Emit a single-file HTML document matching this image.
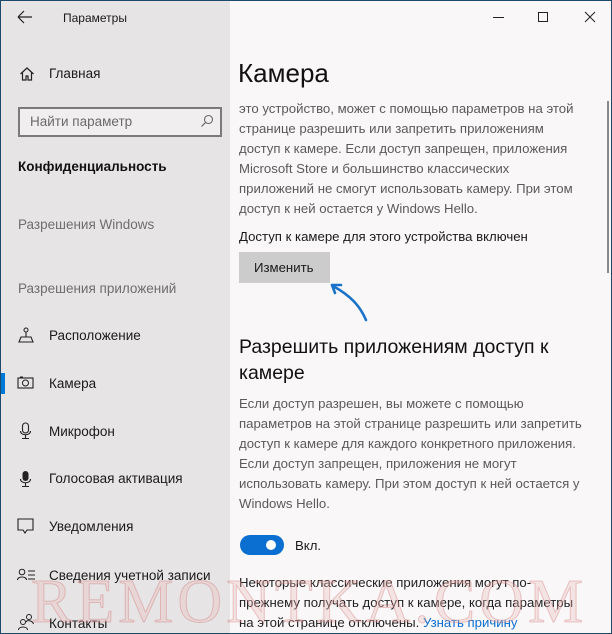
<!DOCTYPE html>
<html><head><meta charset="utf-8"><style>
*{margin:0;padding:0;box-sizing:border-box}
html,body{width:612px;height:634px;overflow:hidden;background:#1d4a6a}
body{font-family:"Liberation Sans","DejaVu Sans",sans-serif;position:relative}
#win{position:absolute;left:1px;top:1px;width:610px;height:632px;background:#f9f7f8;overflow:hidden}
#side{position:absolute;left:0;top:0;width:229px;height:632px;background:#e6e4e5}
.t{position:absolute;white-space:nowrap;font-size:13.5px;color:#1a1a1a}
.g{color:#6e6e6e}
.ic{position:absolute}
.body{position:absolute;left:238px;white-space:nowrap;font-size:13.2px;line-height:20px;color:#5a5a5a}
</style></head><body><div id="win">
<div id="side">
 <svg class="ic" style="left:16px;top:9px" width="16" height="14"><path d="M1 7H15M1 7L7 1M1 7L7 13" stroke="#222" stroke-width="1.2" fill="none"/></svg>
 <div class="t" style="left:62px;top:10px;font-size:12px">Параметры</div>
 <svg class="ic" style="left:18px;top:65px" width="16" height="16"><path d="M1.5 8L8 2l6.5 6M3.5 6.5V14h3.5v-4h2v4h3.5V6.5" stroke="#222" stroke-width="1.2" fill="none"/></svg>
 <div class="t" style="left:48px;top:65px">Главная</div>
 <div style="position:absolute;left:17px;top:106px;width:204px;height:30px;border:2px solid #7a7a7a;background:#f1eef0"></div>
 <div class="t g" style="left:29px;top:113px;color:#6a6a6a">Найти параметр</div>
 <svg class="ic" style="left:199px;top:113px" width="14" height="14"><circle cx="8.5" cy="5.5" r="4" stroke="#666" fill="none" stroke-width="1.1"/><path d="M5.5 8.5L1.5 12.5" stroke="#666" stroke-width="1.2"/></svg>
 <div class="t" style="left:17px;top:158px;font-weight:bold;color:#111">Конфиденциальность</div>
 <div class="t g" style="left:17px;top:216px">Разрешения Windows</div>
 <div class="t g" style="left:17px;top:280px">Разрешения приложений</div>
 <svg class="ic" style="left:17px;top:326px" width="16" height="16"><circle cx="8" cy="3" r="2" stroke="#222" fill="none"/><path d="M8 5v5M3 10h10l2 5H1z" stroke="#222" fill="none" stroke-width="1.1"/></svg>
 <div class="t" style="left:48px;top:327px">Расположение</div>
 <div style="position:absolute;left:0;top:372px;width:4px;height:21px;background:#0078d7"></div>
 <svg class="ic" style="left:16px;top:375px" width="18" height="14"><rect x="1" y="2" width="15" height="10" stroke="#222" fill="none" stroke-width="1.1"/><circle cx="8.5" cy="7" r="3" stroke="#222" fill="none"/><path d="M3 1h3" stroke="#222"/></svg>
 <div class="t" style="left:48px;top:375px">Камера</div>
 <svg class="ic" style="left:18px;top:421px" width="14" height="18"><rect x="3.5" y="1" width="6" height="10" rx="3" stroke="#222" fill="none" stroke-width="1.1"/><path d="M1.5 9c0 5 10 5 10 0M6.5 13v3M3 16.5h7" stroke="#222" fill="none" stroke-width="1.1"/></svg>
 <div class="t" style="left:48px;top:423px">Микрофон</div>
 <svg class="ic" style="left:18px;top:469px" width="14" height="18"><rect x="3.5" y="1" width="6" height="10" rx="3" fill="#222"/><path d="M1.5 9c0 5 10 5 10 0M6.5 13v3M3 16.5h7" stroke="#222" fill="none" stroke-width="1.1"/></svg>
 <div class="t" style="left:48px;top:470px">Голосовая активация</div>
 <svg class="ic" style="left:16px;top:517px" width="18" height="18"><path d="M1 1h15v11H10l-2 3-2-3H1z" stroke="#222" fill="none" stroke-width="1.1"/></svg>
 <div class="t" style="left:48px;top:518px">Уведомления</div>
 <svg class="ic" style="left:16px;top:567px" width="20" height="14"><circle cx="5" cy="4" r="2.8" stroke="#222" fill="none"/><path d="M0.5 12c0-4 9-4 9 0M11 3h7M11 7h7M11 11h7" stroke="#222" fill="none" stroke-width="1.1"/></svg>
 <div class="t" style="left:48px;top:567px">Сведения учетной записи</div>
 <svg class="ic" style="left:16px;top:612px" width="20" height="18"><circle cx="6" cy="9" r="2.5" stroke="#222" fill="none"/><circle cx="12" cy="4" r="2.5" stroke="#222" fill="none"/><path d="M1.5 17c0-4 9-4 9 0M9 9c1-2 6-2 7.5 2" stroke="#222" fill="none"/></svg>
 <div class="t" style="left:48px;top:615px">Контакты</div>
</div>
<div style="position:absolute;left:492px;top:16px;width:11px;height:1px;background:#222"></div>
<div style="position:absolute;left:537px;top:11px;width:10px;height:10px;border:1px solid #222"></div>
<svg class="ic" style="left:583px;top:10px" width="12" height="12"><path d="M1 1l10 10M11 1L1 11" stroke="#222" stroke-width="1"/></svg>
<div class="t" style="left:237px;top:57px;font-size:26px;font-weight:300;color:#111">Камера</div>
<div class="body" style="top:98px">это устройство, может с помощью параметров на этой<br>странице разрешить или запретить приложениям<br>доступ к камере. Если доступ запрещен, приложения<br>Microsoft Store и большинство классических<br>приложений не смогут использовать камеру. При этом<br>доступ к ней остается у Windows Hello.</div>
<div class="t" style="left:238px;top:228px;font-size:13.2px">Доступ к камере для этого устройства включен</div>
<div style="position:absolute;left:238px;top:251px;width:91px;height:31px;background:#cccccc"></div>
<div class="t" style="left:253px;top:259px;font-size:13.2px">Изменить</div>
<svg class="ic" style="left:328px;top:279px" width="45" height="45"><path d="M37 40C31 26 22 16 4 6" stroke="#1a73c9" stroke-width="2.6" fill="none" stroke-linecap="round"/><path d="M3 5l9 0M3 5l3 8" stroke="#1a73c9" stroke-width="2.6" fill="none" stroke-linecap="round"/></svg>
<div class="t" style="left:238px;top:333px;font-size:19.5px;line-height:26px;color:#111">Разрешить приложениям доступ к<br>камере</div>
<div class="body" style="top:393px">Если доступ разрешен, вы можете с помощью<br>параметров на этой странице разрешить или запретить<br>доступ к камере для каждого конкретного приложения.<br>Если доступ запрещен, приложения не могут<br>использовать камеру. При этом доступ к ней остается у<br>Windows Hello.</div>
<div style="position:absolute;left:239px;top:534px;width:44px;height:20px;border-radius:10px;background:#0a6fd0"></div>
<div style="position:absolute;left:265px;top:539px;width:10px;height:10px;border-radius:5px;background:#fff"></div>
<div class="t" style="left:294px;top:537px;font-size:13.2px">Вкл.</div>
<div class="body" style="top:572px;color:#222">Некоторые классические приложения могут по-<br>прежнему получать доступ к камере, когда параметры<br>на этой странице отключены. <span style="color:#0a6fd0">Узнать причину</span></div>
<div style="position:absolute;left:606px;top:100px;width:2px;height:172px;background:#8a8a8a"></div>
<div style="position:absolute;left:30px;top:566px;font-family:'Liberation Serif',serif;font-size:62px;letter-spacing:4px;color:rgba(235,190,190,0.35);-webkit-text-stroke:1px rgba(200,90,90,0.3);white-space:nowrap">REMONTKA.COM</div>
</div></body></html>
